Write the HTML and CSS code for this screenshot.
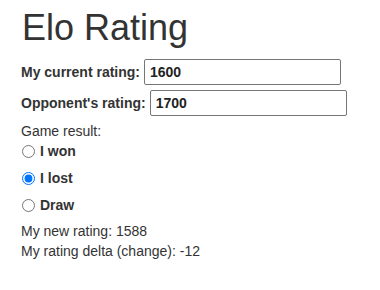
FILE: index.html
```html
<!DOCTYPE html>
<html lang="en">
<head>
  <meta charset="UTF-8">
  <meta name="viewport" content="width=device-width, initial-scale=1.0">
  <title>Elo Rating</title>
  <link rel="stylesheet" href="styles.css">
</head>
<body>
  <div class="container">
    <h1>Elo Rating</h1>
    <div class="form-row">
      <label for="current">My current rating:</label>
      <input type="text" id="current" class="rating-input" value="1600">
    </div>
    <div class="form-row">
      <label for="opponent">Opponent's rating:</label>
      <input type="text" id="opponent" class="rating-input" value="1700">
    </div>
    <div class="result-label">Game result:</div>
    <label class="radio-row"><input type="radio" name="result" value="win"> I won</label>
    <label class="radio-row"><input type="radio" name="result" value="loss" checked> I lost</label>
    <label class="radio-row"><input type="radio" name="result" value="draw"> Draw</label>
    <div class="output">
      <div>My new rating: 1588</div>
      <div>My rating delta (change): -12</div>
    </div>
  </div>
</body>
</html>
```

FILE: styles.css
```css
body {
  margin: 0;
  font-family: "Liberation Sans", Arial, sans-serif;
  font-size: 14px;
  line-height: 20px;
  color: #333333;
  background-color: #ffffff;
}

.container {
  padding: 8px 21px;
}

h1 {
  font-size: 36px;
  font-weight: normal;
  line-height: 1.1;
  margin: 0 0 11px 1px;
}

.form-row {
  display: flex;
  align-items: center;
  margin-bottom: 5px;
}

.form-row label {
  font-weight: bold;
  margin-right: 4px;
}

.rating-input {
  width: 197px;
  height: 26px;
  box-sizing: border-box;
  padding: 1px 5px;
  border: 1px solid #767676;
  border-radius: 2px;
  font-family: "Liberation Sans", Arial, sans-serif;
  font-size: 14px;
  font-weight: bold;
  color: #222222;
}

.result-label {
  margin-top: 3px;
}

.radio-row {
  display: flex;
  align-items: center;
  gap: 3px;
  height: 20px;
  margin-bottom: 7px;
  font-weight: bold;
}

.radio-row input {
  width: 13px;
  height: 13px;
  margin: 1px 2px 0 1px;
}

.output {
  margin-top: -1px;
}
```
